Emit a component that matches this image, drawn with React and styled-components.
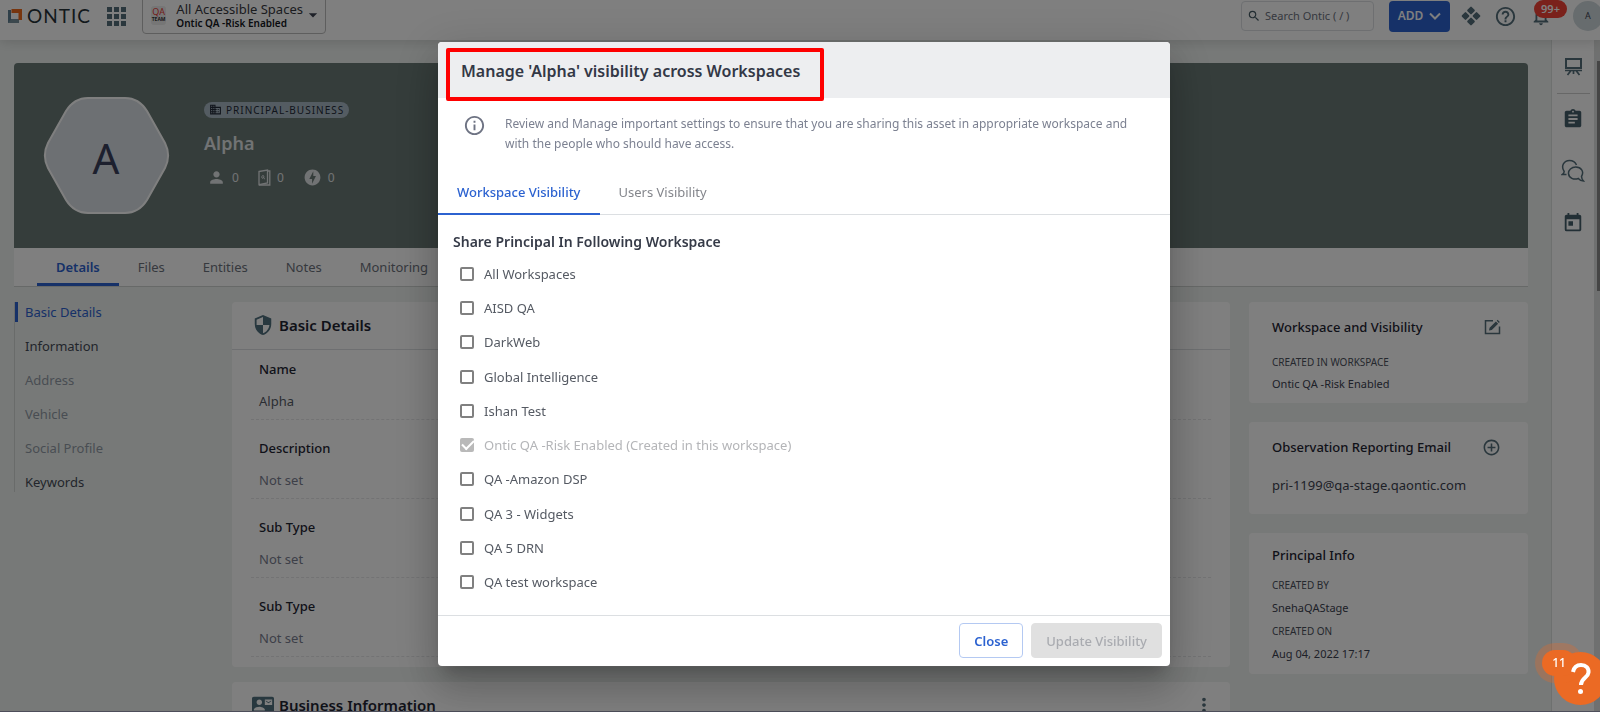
import { useState } from "react"
import styled, { createGlobalStyle } from "styled-components"
import {
  MdAddCircleOutline,
  MdArrowDropDown,
  MdAssignment,
  MdBusiness,
  MdContactMail,
  MdHelpOutline,
  MdInfoOutline,
  MdMoreVert,
  MdNotificationsNone,
  MdOfflineBolt,
  MdPerson,
  MdSearch,
  MdSecurity,
  MdToday
} from "react-icons/md"

const GlobalStyle = createGlobalStyle`
  :root {
    --primary: #2c62d0;
    --page: #eff3f1;
    --slate: #546e7a;
    --text: #3c4250;
    --title: #1f2533;
    --muted: #8a90a0;
    --line: #dcdfe2;
  }

  * {
    box-sizing: border-box;
  }

  body {
    margin: 0;
    overflow: hidden;
    background: var(--page);
    color: var(--text);
    font-family: "Noto Sans", "Open Sans", sans-serif;
    font-size: 13px;
    line-height: 20px;
  }

  button, input {
    font: inherit;
  }

  h1, h2, h3, p, dl, dd, ul {
    margin: 0;
    padding: 0;
  }

  button {
    padding: 0;
    border: 0;
    background: none;
    color: inherit;
  }

  a {
    color: inherit;
    text-decoration: none;
  }

  svg {
    display: block;
    flex: none;
  }
`

const Shell = styled.div`
  display: flex;
  flex-direction: column;
  height: 100vh;
  overflow: hidden;
  border-bottom: 1px solid #9a9cb4;
`

/* top bar */

const TopBar = styled.header`
  position: relative;
  display: flex;
  align-items: flex-start;
  justify-content: space-between;
  flex: none;
  height: 40px;
  padding-left: 8px;
  background: #fff;
  box-shadow: 0 1px 12px rgba(0, 0, 0, 0.16);
`

const TopGroup = styled.div`
  display: flex;
  align-items: center;
  gap: ${({ $gap }) => $gap}px;
  height: 32px;
`

const Brand = styled.a`
  display: flex;
  align-items: center;
  gap: 5px;
  color: #263238;
  font-family: Lato, sans-serif;
  font-size: 19px;
  letter-spacing: 1px;
`

const SpacePicker = styled.button`
  display: flex;
  align-items: center;
  align-self: flex-end;
  width: 184px;
  height: 38px;
  margin-bottom: -2px;
  padding: 0 2px 0 8px;
  border: 1px solid #bdbdbd;
  border-radius: 4px;
  text-align: left;
`

const TeamLogo = styled.span`
  display: flex;
  flex-direction: column;
  align-items: center;
  width: 19px;
  height: 19px;
  margin-right: 10px;
  border-radius: 3px;
  background: #ededed;
  color: #e53935;
  font-size: 9px;
  line-height: 11px;

  small {
    color: #333;
    font-size: 5px;
    font-weight: 700;
    line-height: 5px;
  }
`

const SpaceNames = styled.span`
  display: flex;
  flex: 1;
  flex-direction: column;
  color: #37393f;
  font-size: 13px;
  line-height: 15px;
  white-space: nowrap;

  strong {
    color: #14161c;
    font-size: 10px;
    font-weight: 600;
    line-height: 12px;
  }
`

const SearchBox = styled.label`
  display: flex;
  align-items: center;
  gap: 4px;
  width: 133px;
  height: 30px;
  margin-right: 2px;
  padding-left: 5px;
  border: 1px solid var(--line);
  border-radius: 4px;
  color: #455a64;

  input {
    width: 100px;
    border: 0;
    outline: 0;
    padding: 0;
    background: none;
    font-size: 11px;
  }

  input::placeholder {
    color: #6d7280;
    opacity: 1;
  }
`

const AddButton = styled.button`
  display: flex;
  align-items: center;
  justify-content: center;
  gap: 6px;
  width: 61px;
  height: 31px;
  margin-right: -2px;
  border-radius: 4px;
  background: var(--primary);
  color: #fff;
  font-size: 12px;
  font-weight: 600;
`

const IconButton = styled.button`
  position: relative;
  color: ${({ $color }) => $color || "var(--slate)"};
`

const AlertCount = styled.span`
  position: absolute;
  top: -5px;
  left: 4px;
  width: 33px;
  height: 18px;
  border-radius: 9px;
  background: #f44336;
  color: #fff;
  font-size: 11px;
  font-weight: 600;
  line-height: 18px;
`

const UserAvatar = styled.span`
  flex: none;
  width: 30px;
  height: 30px;
  margin: 0 -3px 0 8px;
  border-radius: 50%;
  background: #cfd8dc;
  font-size: 9px;
  line-height: 30px;
  text-align: center;
`

/* page */

const Body = styled.div`
  display: flex;
  flex: 1;
  min-height: 0;
`

const Content = styled.main`
  flex: 1;
  min-width: 0;
  padding: 23px 23px 0 14px;
`

const Rail = styled.aside`
  display: flex;
  flex-direction: column;
  align-items: center;
  gap: 29px;
  width: 43px;
  padding-top: 17px;
  border-left: 1px solid #dde1df;
  background: #fff;

  hr {
    width: 33px;
    margin: -12px 0 -15px;
    border: 0;
    border-top: 1px solid #cfcfcf;
  }
`

const ScrollTrack = styled.div`
  width: 6px;
  padding: 21px 0 0 3px;
  background: #dfe1e0;
`

const ScrollThumb = styled.div`
  height: 230px;
  background: #8b8b8b;
`

const Hero = styled.section`
  display: flex;
  align-items: center;
  gap: 34px;
  height: 185px;
  padding-left: 29px;
  border-radius: 4px 4px 0 0;
  background: #6a7a76;
  color: #e3e6e8;
`

const HeroInfo = styled.div`
  display: flex;
  flex-direction: column;
  align-items: flex-start;
  margin-bottom: 22px;

  h1 {
    margin: 11px 0;
    font-size: 18px;
    font-weight: 600;
    line-height: 28px;
  }
`

const TypeBadge = styled.span`
  display: flex;
  align-items: center;
  gap: 4px;
  height: 16px;
  padding: 0 5px;
  border-radius: 8px;
  background: #a9b8c4;
  color: #222a38;
  font-size: 10px;
  letter-spacing: 1px;
`

const Stats = styled.div`
  display: flex;
  gap: 19px;
  padding-left: 3px;

  span {
    display: flex;
    align-items: center;
    gap: 6px;
    font-size: 12px;
  }
`

const PageTabs = styled.nav`
  display: flex;
  height: 39px;
  padding-left: 23px;
  border-bottom: 1px solid #cfd3d1;
  background: #fff;
`

const PageTab = styled.a`
  padding: 9px 19px 0;
  border-bottom: 3px solid ${({ $active }) => ($active ? "var(--primary)" : "transparent")};
  color: ${({ $active }) => ($active ? "var(--primary)" : "#6d727c")};
  font-weight: ${({ $active }) => ($active ? 600 : 400)};
`

const Columns = styled.div`
  display: flex;
  align-items: flex-start;
  gap: 19px;
  padding-top: 15px;
`

const SectionNav = styled.nav`
  display: flex;
  flex-direction: column;
  gap: 14px;
  width: 199px;
  border-left: 1px solid #d3d7d5;
`

const SectionLink = styled.a`
  padding-left: 7px;
  border-left: 3px solid ${({ $active }) => ($active ? "var(--primary)" : "transparent")};
  color: ${({ $active, $empty }) => ($active ? "var(--primary)" : $empty ? "#929ba6" : "#454b57")};
`

const Sections = styled.div`
  display: flex;
  flex: 1;
  flex-direction: column;
  gap: 15px;
`

const Card = styled.section`
  border-radius: 4px;
  background: #fff;
`

const CardHeader = styled.header`
  display: flex;
  align-items: center;
  gap: 5px;
  height: 48px;
  padding: 0 15px 2px 20px;
  border-bottom: 1px solid var(--line);
  color: #50707e;

  h2 {
    flex: 1;
    color: var(--title);
    font-size: 15px;
    font-weight: 600;
  }
`

const Fields = styled.dl`
  padding: 0 19px 10px;
`

const Field = styled.div`
  height: 79px;
  padding: 18px 8px 0;
  border-bottom: 1px dashed #e6e7e9;

  &:first-child {
    height: 70px;
    padding-top: 9px;
  }

  dt {
    color: var(--title);
    font-weight: 500;
  }

  dd {
    margin-top: 12px;
    color: ${({ $unset }) => ($unset ? "#7a8090" : "#555b66")};
  }
`

const SideColumn = styled.div`
  display: flex;
  flex-direction: column;
  gap: 19px;
  width: 279px;
`

const SideCard = styled(Card)`
  padding: ${({ $top }) => $top || 14}px 27px 9px 23px;

  header {
    display: flex;
    align-items: center;
    justify-content: space-between;
    height: 22px;
    margin-bottom: ${({ $gap }) => $gap || 12}px;
  }

  h3 {
    color: var(--title);
    font-size: 13px;
    font-weight: 500;
  }

  dt {
    color: #4b515c;
    font-size: 10px;
    line-height: 24px;
  }

  dd {
    font-size: 11px;
    line-height: ${({ $line }) => $line || 20}px;
  }

  p {
    padding-bottom: 10px;
  }
`

/* dialog */

const Backdrop = styled.div`
  position: fixed;
  inset: 0;
  display: flex;
  justify-content: center;
  padding: 42px 0 46px 8px;
  background: rgba(0, 0, 0, 0.5);
`

const Dialog = styled.div`
  position: relative;
  display: flex;
  flex-direction: column;
  width: 732px;
  height: 100%;
  border-radius: 4px;
  background: #fff;
  box-shadow: 0 11px 15px -7px rgba(0, 0, 0, 0.2), 0 24px 38px 3px rgba(0, 0, 0, 0.14),
    0 9px 46px 8px rgba(0, 0, 0, 0.12);
`

const DialogTitle = styled.header`
  height: 56px;
  padding: 16px 23px;
  border-radius: 4px 4px 0 0;
  background: #edeef0;

  h2 {
    color: #333846;
    font-size: 16px;
    font-weight: 600;
    line-height: 26px;
  }
`

const Highlight = styled.div`
  position: absolute;
  top: 6px;
  left: 8px;
  width: 378px;
  height: 53px;
  border: 4px solid #fe0000;
  border-radius: 2px;
  pointer-events: none;
`

const Notice = styled.div`
  display: flex;
  gap: 19px;
  padding: 16px 16px 26px 25px;
  color: #6e7383;

  p {
    color: #7c8191;
    font-size: 12px;
  }
`

const DialogTabs = styled.div`
  display: flex;
  border-bottom: 1px solid var(--line);
`

const DialogTab = styled.button`
  height: 35px;
  margin-bottom: -1px;
  padding: 0 19px 9px;
  border-bottom: 2px solid ${({ $active }) => ($active ? "var(--primary)" : "transparent")};
  color: ${({ $active }) => ($active ? "var(--primary)" : "#84868c")};
  font-weight: ${({ $active }) => ($active ? 500 : 400)};
`

const Share = styled.fieldset`
  display: flex;
  flex: 1;
  flex-direction: column;
  min-height: 0;
  margin: 0;
  padding: 17px 15px 23px;
  border: 0;

  legend {
    float: left;
    padding: 0;
    color: #363b48;
    font-size: 14px;
    font-weight: 600;
  }
`

const Options = styled.ul`
  display: flex;
  flex: 1;
  flex-direction: column;
  justify-content: space-between;
  padding: 12px 7px 0;
  list-style: none;
`

const Option = styled.label`
  display: flex;
  align-items: center;
  gap: 10px;
  width: fit-content;
  color: ${({ $locked }) => ($locked ? "#b4b5b8" : "#555a63")};
`

const Checkbox = styled.input`
  display: grid;
  place-items: center;
  width: 14px;
  height: 14px;
  margin: 0;
  appearance: none;
  border: 2px solid #808080;
  border-radius: 2px;

  &:checked {
    border-color: var(--primary);
    background: var(--primary);
  }

  &:disabled {
    border-color: #b9b9b9;
    background: #b9b9b9;
  }

  &:checked::after {
    content: "";
    width: 10px;
    height: 5px;
    margin-bottom: 3px;
    border: solid #fff;
    border-width: 0 0 2px 2px;
    transform: rotate(-45deg);
  }
`

const DialogFooter = styled.footer`
  display: flex;
  justify-content: flex-end;
  gap: 8px;
  padding: 7px 8px 8px;
  border-top: 1px solid var(--line);
`

const DialogButton = styled.button`
  height: 35px;
  padding: 0 14px;
  border: 1px solid #b4c9f2;
  border-radius: 4px;
  color: var(--primary);
  font-weight: 600;

  &:disabled {
    border-color: #e0e0e0;
    background: #e0e0e0;
    color: #a9abb0;
    font-weight: 500;
  }
`

/* floating help */

const HelpWidget = styled.button`
  position: fixed;
  right: -7px;
  bottom: 7px;
  display: grid;
  place-items: center;
  width: 53px;
  height: 53px;
  border-radius: 50%;
  background: #eb6a24;
  color: #fff;
`

const HelpCount = styled.span`
  position: absolute;
  top: -2px;
  left: -12px;
  width: 34px;
  height: 26px;
  border-radius: 13px;
  background: #eb6a24;
  box-shadow: 0 0 0 7px rgba(235, 106, 36, 0.3);
  font-size: 12px;
  font-weight: 500;
  line-height: 26px;
`

const HelpMark = styled.svg`
  position: relative;
`

const OnticMark = () => (
  <svg width="14" height="15" viewBox="0 0 14 15">
    <path d="M0 1h3v9h8v4H0z" fill="#5f7f93" />
    <path d="M0 14l3.500-4H11v4z" fill="#78909c" />
    <path d="M3.500 0H14v11h-3.500V4H3.500z" fill="#ee6a1d" />
  </svg>
)

const AppsIcon = () => (
  <svg width="19" height="19" viewBox="0 0 19 19" fill="#546e7a">
    {[0, 7, 14].map(y => [0, 7, 14].map(x => (
      <rect key={`${x}-${y}`} x={x} y={y} width="5" height="5" />
    )))}
  </svg>
)

const DiamondsIcon = () => (
  <svg width="20" height="20" viewBox="0 0 20 20" fill="#546e7a">
    {[[10, 4.5], [4.5, 10], [15.5, 10], [10, 15.5]].map(([x, y]) => (
      <rect
        key={`${x}-${y}`}
        x={x - 3}
        y={y - 3}
        width="6"
        height="6"
        rx="1"
        transform={`rotate(45 ${x} ${y})`}
      />
    ))}
  </svg>
)

const ChevronIcon = () => (
  <svg width="12" height="8" viewBox="0 0 12 8" fill="none" stroke="currentColor" strokeWidth="2">
    <path d="M1 1.500l5 5 5-5" />
  </svg>
)

const HexAvatar = () => (
  <svg width="127" height="117" viewBox="0 0 127 117">
    <path
      d="M45 1h37c9 0 17 5 22 13l18 32c4 8 4 17 0 25l-18 32c-5 8-13 13-22 13H45c-9 0-17-5-22-13L5 71c-4-8-4-17 0-25l18-32C28 6 36 1 45 1z"
      fill="#dae0e6"
      stroke="#fff"
      strokeWidth="2"
    />
    <text
      x="63"
      y="77"
      fill="#3b405c"
      fontFamily="Noto Sans, sans-serif"
      fontSize="42"
      textAnchor="middle"
    >
      A
    </text>
  </svg>
)

const ContactBookIcon = () => (
  <svg width="13" height="17" viewBox="0 0 13 17" fill="none" stroke="currentColor" strokeWidth="1.300">
    <path d="M1 2.500L9.500 1v13L1 15.700z" />
    <path d="M9.500 2h2.300v14H1" />
    <path d="M7 9.600c-1 .5-1.500-.3-1.200-2.400-.2-1.200-1.900-.8-2 .8-.1 1.700 1.200 1.700 1.900.3" strokeWidth="1" />
  </svg>
)

const BoardIcon = () => (
  <svg width="19" height="19" viewBox="0 0 19 19" fill="none" stroke="#546e7a" strokeWidth="2">
    <path d="M2 2h15v9H2z" />
    <path d="M1 13.500h17M7 13.500L3.500 18M12 13.500l3.500 4.500M9.500 13v4" strokeWidth="1.700" />
  </svg>
)

const ChatsIcon = () => (
  <svg width="24" height="24" viewBox="0 0 24 24" fill="none" stroke="#546e7a" strokeWidth="1.500">
    <path d="M5.500 15.500H1.200c1.500-1 2-1.800 2-3C-.5 7 3 1.500 8.500 1.500c3.400 0 5.800 1.700 7 4.500" />
    <path d="M20.500 17.500c3-5-.5-9.500-5.700-9.500-4.300 0-7.600 3-7.300 6.600.4 4.300 5.300 6.600 9.800 4.900 1.500 1.800 3 2.500 5.200 2.500-1.200-1.200-1.900-2.800-2-4.500z" />
  </svg>
)

const EditIcon = () => (
  <svg width="17" height="16" viewBox="0 0 17 16" fill="none" stroke="#546e7a" strokeWidth="1.500">
    <path d="M9 1.800H1.500v12.700h14V7.500" />
    <path d="M5 11.500l.6-2.800 6.300-6.200 2.200 2.200-6.300 6.200zM12.700 1.700l.9-.9 2.200 2.200-.9.9z" fill="#546e7a" stroke="none" />
  </svg>
)

const pageTabs = ["Details", "Files", "Entities", "Notes", "Monitoring"]

const sectionLinks = [
  { name: "Basic Details", active: true },
  { name: "Information" },
  { name: "Address", empty: true },
  { name: "Vehicle", empty: true },
  { name: "Social Profile", empty: true },
  { name: "Keywords" }
]

const fields = [
  { label: "Name", value: "Alpha" },
  { label: "Description" },
  { label: "Sub Type" },
  { label: "Sub Type" }
]

const workspaces = [
  { name: "All Workspaces" },
  { name: "AISD QA" },
  { name: "DarkWeb" },
  { name: "Global Intelligence" },
  { name: "Ishan Test" },
  { name: "Ontic QA -Risk Enabled (Created in this workspace)", locked: true },
  { name: "QA -Amazon DSP" },
  { name: "QA 3 - Widgets" },
  { name: "QA 5 DRN" },
  { name: "QA test workspace" }
]

const Header = () => (
  <TopBar>
    <TopGroup $gap={16}>
      <Brand href="#"><OnticMark />ONTIC</Brand>
      <IconButton aria-label="Apps"><AppsIcon /></IconButton>
      <SpacePicker>
        <TeamLogo>QA<small>TEAM</small></TeamLogo>
        <SpaceNames>
          All Accessible Spaces
          <strong>Ontic QA -Risk Enabled</strong>
        </SpaceNames>
        <MdArrowDropDown size={20} />
      </SpacePicker>
    </TopGroup>
    <TopGroup $gap={13}>
      <SearchBox>
        <MdSearch size={14} />
        <input type="text" placeholder="Search Ontic ( / )" aria-label="Search Ontic" />
      </SearchBox>
      <AddButton>ADD<ChevronIcon /></AddButton>
      <IconButton aria-label="Integrations"><DiamondsIcon /></IconButton>
      <IconButton aria-label="Help"><MdHelpOutline size={23} /></IconButton>
      <IconButton aria-label="Notifications">
        <MdNotificationsNone size={22} />
        <AlertCount>99+</AlertCount>
      </IconButton>
      <UserAvatar>A</UserAvatar>
    </TopGroup>
  </TopBar>
)

const Profile = () => (
  <Content>
    <Hero>
      <HexAvatar />
      <HeroInfo>
        <TypeBadge><MdBusiness size={13} />PRINCIPAL-BUSINESS</TypeBadge>
        <h1>Alpha</h1>
        <Stats>
          <span><MdPerson size={19} />0</span>
          <span><ContactBookIcon />0</span>
          <span><MdOfflineBolt size={19} />0</span>
        </Stats>
      </HeroInfo>
    </Hero>
    <PageTabs>
      {pageTabs.map((tab, i) => (
        <PageTab key={tab} href="#" $active={i === 0}>{tab}</PageTab>
      ))}
    </PageTabs>
    <Columns>
      <SectionNav>
        {sectionLinks.map(({ name, active, empty }) => (
          <SectionLink key={name} href="#" $active={active} $empty={empty}>{name}</SectionLink>
        ))}
      </SectionNav>
      <Sections>
        <Card>
          <CardHeader>
            <MdSecurity size={22} />
            <h2>Basic Details</h2>
          </CardHeader>
          <Fields>
            {fields.map(({ label, value }, i) => (
              <Field key={i} $unset={!value}>
                <dt>{label}</dt>
                <dd>{value || "Not set"}</dd>
              </Field>
            ))}
          </Fields>
        </Card>
        <Card>
          <CardHeader>
            <MdContactMail size={22} />
            <h2>Business Information</h2>
            <IconButton aria-label="More"><MdMoreVert size={22} /></IconButton>
          </CardHeader>
        </Card>
      </Sections>
      <SideColumn>
        <SideCard>
          <header>
            <h3>Workspace and Visibility</h3>
            <IconButton aria-label="Edit visibility"><EditIcon /></IconButton>
          </header>
          <dl>
            <dt>CREATED IN WORKSPACE</dt>
            <dd>Ontic QA -Risk Enabled</dd>
          </dl>
        </SideCard>
        <SideCard $gap={17}>
          <header>
            <h3>Observation Reporting Email</h3>
            <IconButton aria-label="Add email"><MdAddCircleOutline size={19} /></IconButton>
          </header>
          <p>pri-1199@qa-stage.qaontic.com</p>
        </SideCard>
        <SideCard $top={11} $gap={7} $line={22}>
          <header>
            <h3>Principal Info</h3>
          </header>
          <dl>
            <dt>CREATED BY</dt>
            <dd>SnehaQAStage</dd>
            <dt>CREATED ON</dt>
            <dd>Aug 04, 2022 17:17</dd>
          </dl>
        </SideCard>
      </SideColumn>
    </Columns>
  </Content>
)

const VisibilityDialog = () => {
  const [tab, setTab] = useState("Workspace Visibility")
  const [selected, setSelected] = useState([])

  const toggle = (name) => {
    setSelected(selected.includes(name) ? selected.filter(n => n !== name) : [...selected, name])
  }

  return (
    <Backdrop>
      <Dialog role="dialog" aria-labelledby="dialog-title">
        <DialogTitle>
          <h2 id="dialog-title">Manage 'Alpha' visibility across Workspaces</h2>
        </DialogTitle>
        <Highlight />
        <Notice>
          <MdInfoOutline size={23} />
          <p>
            Review and Manage important settings to ensure that you are sharing this asset in
            appropriate workspace and with the people who should have access.
          </p>
        </Notice>
        <DialogTabs>
          {["Workspace Visibility", "Users Visibility"].map(name => (
            <DialogTab key={name} $active={name === tab} onClick={() => setTab(name)}>
              {name}
            </DialogTab>
          ))}
        </DialogTabs>
        <Share>
          <legend>Share Principal In Following Workspace</legend>
          <Options>
            {workspaces.map(({ name, locked }) => (
              <li key={name}>
                <Option $locked={locked}>
                  <Checkbox
                    type="checkbox"
                    checked={locked || selected.includes(name)}
                    disabled={locked}
                    onChange={() => toggle(name)}
                  />
                  {name}
                </Option>
              </li>
            ))}
          </Options>
        </Share>
        <DialogFooter>
          <DialogButton>Close</DialogButton>
          <DialogButton disabled={selected.length === 0}>Update Visibility</DialogButton>
        </DialogFooter>
      </Dialog>
    </Backdrop>
  )
}

const App = () => (
  <>
    <GlobalStyle />
    <Shell>
      <Header />
      <Body>
        <Profile />
        <Rail>
          <IconButton aria-label="Board"><BoardIcon /></IconButton>
          <hr />
          <IconButton aria-label="Tasks" $color="#455f6b"><MdAssignment size={22} /></IconButton>
          <IconButton aria-label="Chats"><ChatsIcon /></IconButton>
          <IconButton aria-label="Calendar" $color="#455f6b"><MdToday size={22} /></IconButton>
        </Rail>
        <ScrollTrack><ScrollThumb /></ScrollTrack>
      </Body>
    </Shell>
    <VisibilityDialog />
    <HelpWidget aria-label="Open help">
      <HelpCount>11</HelpCount>
      <HelpMark width="20" height="32" viewBox="0 0 20 32" fill="none" stroke="#fff" strokeWidth="4">
        <path d="M2 9c1-5 4-7 8-7 5 0 8 3 7.500 7.500C17 15 10 15 10 22" />
        <circle cx="9.500" cy="28.500" r="2.500" fill="#fff" stroke="none" />
      </HelpMark>
    </HelpWidget>
  </>
)

export default App
